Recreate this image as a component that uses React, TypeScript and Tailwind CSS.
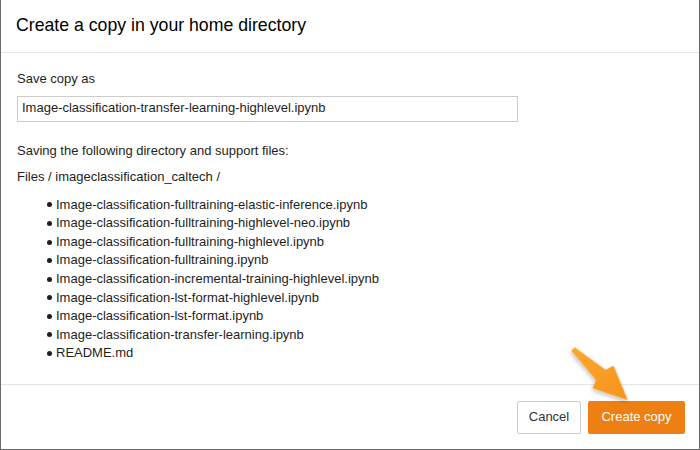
import React from 'react';

const files = [
  'Image-classification-fulltraining-elastic-inference.ipynb',
  'Image-classification-fulltraining-highlevel-neo.ipynb',
  'Image-classification-fulltraining-highlevel.ipynb',
  'Image-classification-fulltraining.ipynb',
  'Image-classification-incremental-training-highlevel.ipynb',
  'Image-classification-lst-format-highlevel.ipynb',
  'Image-classification-lst-format.ipynb',
  'Image-classification-transfer-learning.ipynb',
  'README.md',
];

// Callout arrow pointing at the primary button
const Arrow = () => (
  <svg className="absolute left-0 top-0 pointer-events-none" width="700" height="450">
    <defs>
      <linearGradient id="arrowFill" x1="0" y1="0" x2="1" y2="0">
        <stop offset="0" stopColor="#fba730" />
        <stop offset="1" stopColor="#f7931c" />
      </linearGradient>
      <filter id="arrowShadow" x="-30%" y="-30%" width="160%" height="160%">
        <feDropShadow dx="1" dy="2" stdDeviation="2" floodColor="#000" floodOpacity="0.25" />
      </filter>
    </defs>
    <g transform="translate(573 349) rotate(43)" filter="url(#arrowShadow)">
      <polygon
        points="0,-2.5 38,-7 41,-15.5 75,0 41,15.5 38,7 0,2.5"
        fill="url(#arrowFill)"
      />
    </g>
  </svg>
);

export default function App() {
  return (
    <div
      className="relative w-[700px] h-[450px] bg-[#6a6a6a] overflow-hidden"
      style={{ fontFamily: '"Liberation Sans", Arial, sans-serif' }}
    >
      <div className="ml-px w-[698px] h-[449px] bg-white flex flex-col text-[#1e1e1e] text-[13px] leading-[1.42857]">
        {/* Header */}
        <div className="h-[53px] shrink-0 border-b border-[#e5e5e5] flex items-center pl-[15px] pb-px">
          <h4 className="text-[17.7px] text-black leading-none">Create a copy in your home directory</h4>
        </div>

        {/* Body */}
        <div className="h-[331px] shrink-0 px-[16px] pt-[17px]">
          <p>Save copy as</p>
          <div className="mt-[7px] w-[501px] h-[26px] border border-[#ccc] flex items-center px-[4px]">
            <span>Image-classification-transfer-learning-highlevel.ipynb</span>
          </div>
          <p className="mt-[20px]">Saving the following directory and support files:</p>
          <p className="mt-[8px]">Files / imageclassification_caltech /</p>
          <ul className="mt-[9px] pl-[30px]">
            {files.map((f) => (
              <li key={f} className="flex items-center">
                <span className="w-[5px] h-[5px] rounded-full bg-[#1e1e1e] mr-[4px] shrink-0" />
                <span>{f}</span>
              </li>
            ))}
          </ul>
        </div>

        {/* Footer */}
        <div className="flex-1 border-t border-[#e5e5e5] flex items-start justify-end gap-[7px] pt-[16px] pr-[14px]">
          <button className="h-[33px] w-[64px] border border-[#ccc] rounded-[2px] bg-white text-[#333] text-[13px]">
            Cancel
          </button>
          <button className="h-[33px] w-[97px] rounded-[2px] bg-[#ee8013] text-white text-[13px]">
            Create copy
          </button>
        </div>
      </div>
      <Arrow />
    </div>
  );
}
